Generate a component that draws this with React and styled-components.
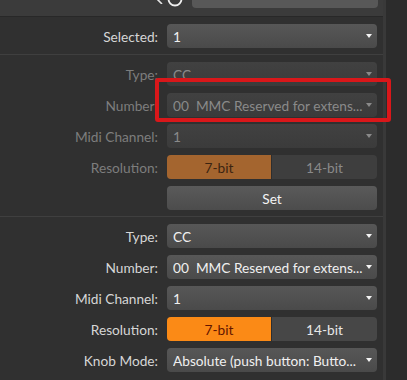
import React from 'react';
import styled, { createGlobalStyle } from 'styled-components';

const GlobalStyle = createGlobalStyle`
  html, body {
    margin: 0;
    padding: 0;
    background: #2c2c2c;
  }
  body {
    font-family: 'Lato', 'Noto Sans', sans-serif;
  }
`;

const Frame = styled.div`
  display: flex;
  width: 407px;
  height: 380px;
  overflow: hidden;
`;

const Main = styled.div`
  display: flex;
  flex-direction: column;
  width: 383px;
  background: #303030;
`;

const Rule = styled.div`
  width: 3px;
  background: #393939;
`;

const Strip = styled.div`
  flex: 1;
  background: #2c2c2c;
`;

const Header = styled.div`
  display: flex;
  align-items: flex-end;
  height: 8px;
  padding-bottom: 8px;
  overflow: hidden;
  background: #3b3b3b;
  border-bottom: 1px solid #282828;
`;

const HeaderIcon = styled.svg`
  flex: none;
  margin-left: ${p => p.$left || 0}px;
  margin-bottom: ${p => p.$lift || 0}px;
`;

const HeaderButton = styled.div`
  flex: none;
  width: 186px;
  height: 22px;
  margin-left: 9px;
  border-radius: 4px;
  background: #585858;
  color: #f2f2f2;
  font-size: 13px;
  line-height: 19px;
  letter-spacing: 0.6px;
  text-align: center;
  white-space: nowrap;
  overflow: hidden;
`;

const Section = styled.div`
  display: flex;
  flex-direction: column;
  gap: 7px;
  padding: 7px 0 6px;
  border-top: ${p => (p.$first ? 'none' : '1px solid #3f3f3f')};
`;

const Row = styled.div`
  display: grid;
  grid-template-columns: 158px 210px;
  column-gap: 9px;
  align-items: center;
  height: 24px;
  position: relative;
`;

const Label = styled.div`
  text-align: right;
  font-size: 13.7px;
  color: ${p => (p.$disabled ? '#7d7d7d' : '#d6d6d6')};
  white-space: nowrap;
`;

const Select = styled.div`
  display: flex;
  align-items: center;
  height: 24px;
  padding: 0 5px 0 6px;
  box-sizing: border-box;
  border-radius: 4px;
  background: ${p =>
    p.$disabled
      ? 'linear-gradient(#414141, #3b3b3b)'
      : 'linear-gradient(#575757, #4a4a4a)'};
  color: ${p => (p.$disabled ? '#8a8a8a' : '#f0f0f0')};
  font-size: 13.7px;
`;

const Value = styled.span`
  flex: 1;
  white-space: pre;
  overflow: hidden;
`;

const Arrow = styled.span`
  flex: none;
  width: 0;
  height: 0;
  margin-left: 2px;
  border-left: 3px solid transparent;
  border-right: 3px solid transparent;
  border-top: 4px solid ${p => (p.$disabled ? '#8a8a8a' : '#f4f4f4')};
`;

const Toggle = styled.div`
  display: grid;
  grid-template-columns: 105px 105px;
  height: 24px;
  border-radius: 4px;
  overflow: hidden;
  background: ${p => (p.$disabled ? '#3e3e3e' : '#474747')};
`;

const Segment = styled.div`
  display: flex;
  align-items: center;
  justify-content: center;
  font-size: 13.7px;
  background: ${p =>
    p.$on ? (p.$disabled ? '#a4652f' : '#fb8a16') : 'transparent'};
  color: ${p =>
    p.$on
      ? p.$disabled
        ? '#3b2411'
        : '#621500'
      : p.$disabled
        ? '#8a8a8a'
        : '#e8e8e8'};
  border-right: ${p => (p.$on ? '1px solid #2e2e2e' : 'none')};
`;

const Button = styled.div`
  display: flex;
  align-items: center;
  justify-content: center;
  height: 24px;
  border-radius: 4px;
  background: linear-gradient(#5a5a5a, #4c4c4c);
  color: #f4f4f4;
  font-size: 13.7px;
`;

const Highlight = styled.div`
  position: absolute;
  left: 155px;
  top: -15px;
  width: 236px;
  height: 44px;
  box-sizing: border-box;
  border: 4px solid #d9171a;
  border-radius: 3px;
  pointer-events: none;
`;

function SelectField({ label, value, disabled }) {
  return (
    <>
      <Label $disabled={disabled}>{label}</Label>
      <Select $disabled={disabled}>
        <Value>{value}</Value>
        <Arrow $disabled={disabled} />
      </Select>
    </>
  );
}

function Resolution({ disabled }) {
  return (
    <Row>
      <Label $disabled={disabled}>Resolution:</Label>
      <Toggle $disabled={disabled}>
        <Segment $on $disabled={disabled}>7-bit</Segment>
        <Segment $disabled={disabled}>14-bit</Segment>
      </Toggle>
    </Row>
  );
}

export default function App() {
  return (
    <>
      <GlobalStyle />
      <Frame>
        <Main>
          <Header>
            <HeaderIcon width="10" height="10" viewBox="0 0 10 10" $left={154} $lift={4}>
              <path d="M8 0 L3 5 L8 10" fill="none" stroke="#e6e6e6" strokeWidth="1.6" />
            </HeaderIcon>
            <HeaderIcon width="16" height="14" viewBox="0 0 16 14" $left={3} $lift={0}>
              <circle cx="8" cy="5" r="6.5" fill="none" stroke="#f0f0f0" strokeWidth="1.8" />
            </HeaderIcon>
            <HeaderButton>CREATE AND OPEN PRESETS</HeaderButton>
          </Header>

          <Section $first>
            <Row>
              <SelectField label="Selected:" value="1" />
            </Row>
          </Section>

          <Section>
            <Row>
              <SelectField label="Type:" value="CC" disabled />
            </Row>
            <Row>
              <SelectField label="Number:" value="00  MMC Reserved for extens..." disabled />
              <Highlight />
            </Row>
            <Row>
              <SelectField label="Midi Channel:" value="1" disabled />
            </Row>
            <Resolution disabled />
            <Row>
              <span />
              <Button>Set</Button>
            </Row>
          </Section>

          <Section>
            <Row>
              <SelectField label="Type:" value="CC" />
            </Row>
            <Row>
              <SelectField label="Number:" value="00  MMC Reserved for extens..." />
            </Row>
            <Row>
              <SelectField label="Midi Channel:" value="1" />
            </Row>
            <Resolution />
            <Row>
              <SelectField label="Knob Mode:" value="Absolute (push button: Butto..." />
            </Row>
          </Section>
        </Main>
        <Rule />
        <Strip />
      </Frame>
    </>
  );
}
